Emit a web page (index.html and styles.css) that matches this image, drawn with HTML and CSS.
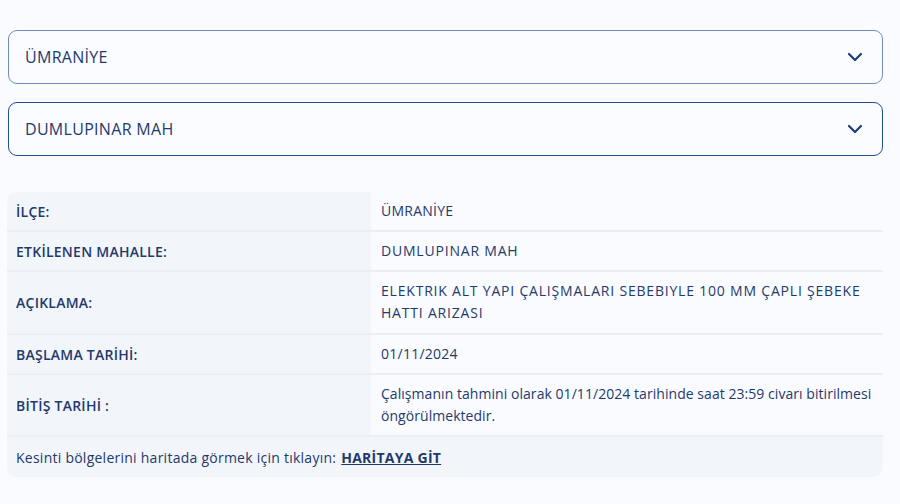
FILE: index.html
```html
<!DOCTYPE html>
<html lang="tr">
<head>
<meta charset="utf-8">
<link rel="stylesheet" href="styles.css">
</head>
<body>
<main class="page">
  <div class="select select--light">
    <span class="select-text">ÜMRANİYE</span>
    <svg class="chev" width="16" height="10" viewBox="0 0 16 10"><path d="M2 2l6 6 6-6" fill="none" stroke="#1b3f78" stroke-width="2.2" stroke-linecap="round" stroke-linejoin="round"/></svg>
  </div>
  <div class="select select--dark">
    <span class="select-text">DUMLUPINAR MAH</span>
    <svg class="chev" width="16" height="10" viewBox="0 0 16 10"><path d="M2 2l6 6 6-6" fill="none" stroke="#1b3f78" stroke-width="2.2" stroke-linecap="round" stroke-linejoin="round"/></svg>
  </div>

  <div class="info">
    <div class="row">
      <div class="label">İLÇE:</div>
      <div class="value">ÜMRANİYE</div>
    </div>
    <div class="row">
      <div class="label">ETKİLENEN MAHALLE:</div>
      <div class="value value--caps">DUMLUPINAR MAH</div>
    </div>
    <div class="row">
      <div class="label">AÇIKLAMA:</div>
      <div class="value value--caps value--tall">ELEKTRIK ALT YAPI ÇALIŞMALARI SEBEBIYLE 100 MM ÇAPLI ŞEBEKE HATTI ARIZASI</div>
    </div>
    <div class="row">
      <div class="label">BAŞLAMA TARİHİ:</div>
      <div class="value">01/11/2024</div>
    </div>
    <div class="row">
      <div class="label">BİTİŞ TARİHİ :</div>
      <div class="value value--text">Çalışmanın tahmini olarak 01/11/2024 tarihinde saat 23:59 civarı bitirilmesi öngörülmektedir.</div>
    </div>
    <div class="footer">Kesinti bölgelerini haritada görmek için tıklayın: <a class="map-link" href="#">HARİTAYA GİT</a></div>
  </div>
</main>
</body>
</html>
```
FILE: styles.css
```css
* { box-sizing: border-box; }
html, body { margin: 0; padding: 0; background: #f9fbfe; }
body {
  font-family: "Open Sans", "Liberation Sans", sans-serif;
  color: #1f3a6b;
}
.page {
  width: 876px;
  margin-left: 7px;
  padding-top: 30px;
  display: flex;
  flex-direction: column;
}
.select {
  height: 54px;
  border: 1.5px solid #6f8cbb;
  border-radius: 9px;
  background: #fafcff;
  display: flex;
  align-items: center;
  justify-content: space-between;
  padding: 0 19px 0 16px;
  margin-left: 1px;
}
.select--dark { border-color: #244f8f; margin-top: 18px; }
.select-text { font-size: 16px; font-weight: 500; color: #1f3a6b; letter-spacing: 0.3px; }
.chev { display: block; }

.info {
  margin-top: 36px;
  border-radius: 10px;
  overflow: hidden;
  display: flex;
  flex-direction: column;
  font-size: 14px;
  letter-spacing: 0.25px;
}
.row {
  display: grid;
  grid-template-columns: 364px 1fr;
  border-bottom: 2px solid #ebeff4;
}
.label {
  background: #f2f5fa;
  padding: 0 9px;
  font-weight: 600;
  display: flex;
  align-items: center;
  min-height: 38px;
}
.value {
  background: #f9fbfe;
  padding: 8px 8px 8px 10px;
  line-height: 22px;
  display: flex;
  align-items: center;
  min-height: 38px;
}
.value--tall { padding-bottom: 9px; }
.value--caps { letter-spacing: 0.8px; }
.value--text { letter-spacing: 0.05px; }
.footer {
  background: #f2f5fa;
  height: 40px;
  padding: 0 9px;
  font-weight: 500;
  display: flex;
  align-items: center;
  gap: 5px;
}
.map-link { color: #1f3a6b; font-weight: 700; text-decoration: underline; }
```
